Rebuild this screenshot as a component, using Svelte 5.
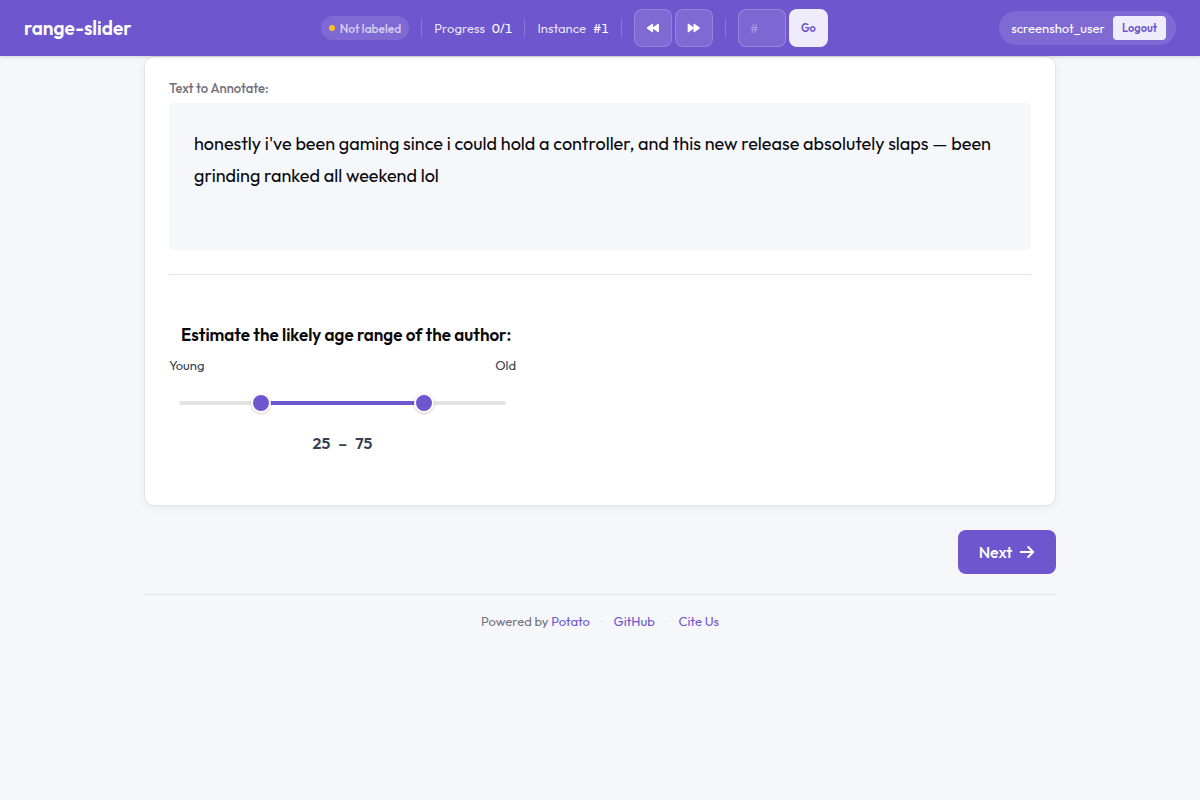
<script>
  let low = $state(25);
  let high = $state(75);
  let target = $state('');

  function clampLow() {
    if (low > high) low = high;
  }
  function clampHigh() {
    if (high < low) high = low;
  }
</script>

<header class="navbar">
  <div class="brand">range-slider</div>

  <div class="status">
    <span class="pill"><span class="dot"></span>Not labeled</span>
    <span class="divider"></span>
    <span class="stat">Progress <b>0/1</b></span>
    <span class="divider"></span>
    <span class="stat">Instance <b>#1</b></span>
    <span class="divider"></span>
    <div class="group">
      <button class="icon-button" type="button" aria-label="Previous unlabeled">
        <svg width="14" height="12" viewBox="0 0 14 12" aria-hidden="true">
          <path d="M6.6 2v8L1 6zM12.4 2v8L6.8 6z" fill="currentColor" stroke="currentColor" stroke-width="1" stroke-linejoin="round" />
        </svg>
      </button>
      <button class="icon-button" type="button" aria-label="Next unlabeled">
        <svg width="14" height="12" viewBox="0 0 14 12" aria-hidden="true">
          <path d="M1.2 2v8l5.6-4zM7 2v8l5.6-4z" fill="currentColor" stroke="currentColor" stroke-width="1" stroke-linejoin="round" />
        </svg>
      </button>
    </div>
    <span class="divider"></span>
    <form class="group" onsubmit={(e) => e.preventDefault()}>
      <input class="jump" type="text" inputmode="numeric" placeholder="#" aria-label="Instance number" bind:value={target} />
      <button class="go" type="submit">Go</button>
    </form>
  </div>

  <div class="user">
    <span>screenshot_user</span>
    <button class="logout" type="button">Logout</button>
  </div>
</header>

<main class="container">
  <section class="card">
    <h2 class="caption">Text to Annotate:</h2>
    <p class="passage">honestly i've been gaming since i could hold a controller, and this new release absolutely slaps — been grinding ranked all weekend lol</p>
    <hr />
    <fieldset class="question">
      <legend>Estimate the likely age range of the author:</legend>
      <div class="ends"><span>Young</span><span>Old</span></div>
      <div class="slider">
        <div class="track">
          <div class="fill" style="margin-left: {low}%; width: {high - low}%"></div>
        </div>
        <input type="range" min="0" max="100" aria-label="Youngest age" bind:value={low} oninput={clampLow} />
        <input type="range" min="0" max="100" aria-label="Oldest age" bind:value={high} oninput={clampHigh} />
      </div>
      <output class="values"><span>{low}</span><span>–</span><span>{high}</span></output>
    </fieldset>
  </section>

  <div class="actions">
    <button class="next" type="button">
      Next
      <svg width="16" height="16" viewBox="0 0 16 16" aria-hidden="true">
        <path d="M1.8 8h12M9.2 3l5 5-5 5" fill="none" stroke="currentColor" stroke-width="2" stroke-linecap="round" stroke-linejoin="round" />
      </svg>
    </button>
  </div>

  <footer>
    <span>Powered by <a href="#potato">Potato</a></span>
    <span class="sep">·</span>
    <a href="#github">GitHub</a>
    <span class="sep">·</span>
    <a href="#cite">Cite Us</a>
  </footer>
</main>

<style>
  :global(body) {
    background: #f5f7fb;
    color: #09090b;
    font-family: Outfit, Lato, sans-serif;
    font-size: 16px;
  }
  :global(*) {
    box-sizing: border-box;
  }
  button,
  input {
    font-family: inherit;
  }
  button {
    cursor: pointer;
  }
  .navbar {
    position: relative;
    display: flex;
    align-items: center;
    justify-content: space-between;
    height: 56px;
    padding: 0 24px;
    background: #6e56cf;
    color: #fff;
    box-shadow: 0 1px 3px rgba(0, 0, 0, 0.15);
  }
  .brand {
    margin-right: 18px;
    font-size: 19px;
    font-weight: 600;
  }
  .status {
    display: flex;
    align-items: center;
    gap: 12px;
    font-size: 13px;
  }
  .pill {
    display: flex;
    align-items: center;
    gap: 5px;
    height: 24px;
    padding: 0 8px;
    border-radius: 12px;
    background: rgba(255, 255, 255, 0.12);
    color: rgba(255, 255, 255, 0.7);
    font-size: 12px;
    font-weight: 500;
  }
  .dot {
    width: 6px;
    height: 6px;
    border-radius: 50%;
    background: #fbbf24;
  }
  .divider {
    width: 1px;
    height: 18px;
    background: rgba(255, 255, 255, 0.2);
  }
  .stat {
    display: flex;
    gap: 7px;
    color: rgba(255, 255, 255, 0.85);
  }
  .stat b {
    color: #fff;
    font-weight: 400;
    font-variant-numeric: tabular-nums;
  }
  .group {
    display: flex;
    gap: 3px;
  }
  .icon-button {
    display: grid;
    place-items: center;
    width: 38px;
    height: 38px;
    padding: 0;
    border: 1px solid rgba(255, 255, 255, 0.16);
    border-radius: 8px;
    background: rgba(255, 255, 255, 0.12);
    color: #fff;
  }
  .jump {
    width: 48px;
    height: 38px;
    padding: 0 11px;
    border: 1px solid rgba(255, 255, 255, 0.2);
    border-radius: 8px;
    background: rgba(255, 255, 255, 0.1);
    color: #fff;
    font-size: 13px;
  }
  .jump::placeholder {
    color: rgba(255, 255, 255, 0.35);
  }
  .go,
  .logout {
    border: 0;
    background: #eeebfa;
    color: #6e56cf;
    font-size: 11px;
    font-weight: 600;
  }
  .go {
    width: 39px;
    height: 38px;
    padding: 0;
    border-radius: 8px;
  }
  .user {
    display: flex;
    align-items: center;
    gap: 8px;
    height: 34px;
    padding: 0 10px 0 12px;
    border-radius: 17px;
    background: rgba(255, 255, 255, 0.12);
    font-size: 13px;
  }
  .logout {
    height: 24px;
    padding: 0 9px;
    border-radius: 4px;
  }
  .container {
    max-width: 960px;
    margin: 0 auto;
    padding: 0 24px;
  }
  .card {
    padding: 23px 24px 50px;
    border: 1px solid #e2e2e8;
    border-radius: 10px;
    background: #fff;
    box-shadow: 0 2px 8px rgba(0, 0, 0, 0.06);
  }
  .caption {
    margin: 0 0 7px;
    color: #71717a;
    font-size: 13px;
    font-weight: 500;
    line-height: 16px;
  }
  .passage {
    min-height: 147px;
    margin: 0;
    padding: 25px;
    border-radius: 4px;
    background: #f5f7fb;
    font-size: 18px;
    line-height: 32px;
  }
  hr {
    margin: 24px 0 0;
    border: 0;
    border-top: 1px solid #e4e4e7;
  }
  .question {
    width: 347px;
    min-width: 0;
    max-width: 100%;
    margin: 48px 0 0;
    padding: 0;
    border: 0;
  }
  legend {
    padding: 0 0 0 12px;
    font-size: 17px;
    font-weight: 600;
    line-height: 24px;
  }
  .ends {
    display: flex;
    justify-content: space-between;
    margin-top: 10px;
    color: #374151;
    font-size: 13px;
    line-height: 16px;
  }
  .slider {
    position: relative;
    height: 40px;
    margin-top: 10px;
    padding: 18px 10px;
  }
  .track {
    height: 4px;
    border-radius: 2px;
    background: #e4e4e7;
  }
  .fill {
    height: 4px;
    background: #6e56cf;
  }
  input[type='range'] {
    position: absolute;
    inset: 0;
    width: 100%;
    height: 40px;
    margin: 0;
    appearance: none;
    background: transparent;
    pointer-events: none;
  }
  input[type='range']::-webkit-slider-thumb {
    width: 20px;
    height: 20px;
    border: 2px solid #fff;
    border-radius: 50%;
    appearance: none;
    background: #6e56cf;
    box-shadow: 0 1px 3px rgba(0, 0, 0, 0.2);
    cursor: pointer;
    pointer-events: auto;
  }
  .values {
    display: flex;
    justify-content: center;
    gap: 8px;
    margin-top: 8px;
    color: #374151;
    font-size: 16px;
    font-weight: 600;
    line-height: 24px;
  }
  .actions {
    display: flex;
    justify-content: flex-end;
    padding: 24px 0 20px;
  }
  .next {
    display: flex;
    align-items: center;
    justify-content: center;
    gap: 7px;
    min-width: 98px;
    height: 44px;
    padding: 0 20px;
    border: 0;
    border-radius: 8px;
    background: #6e56cf;
    color: #fff;
    font-size: 16px;
    font-weight: 500;
  }
  footer {
    display: flex;
    justify-content: center;
    gap: 11px;
    padding: 17px 0;
    border-top: 1px solid #e4e4e7;
    color: #71717a;
    font-size: 13px;
    line-height: 18px;
  }
  footer a {
    color: #6e56cf;
    text-decoration: none;
  }
  .sep {
    color: #dcdce4;
  }
</style>
